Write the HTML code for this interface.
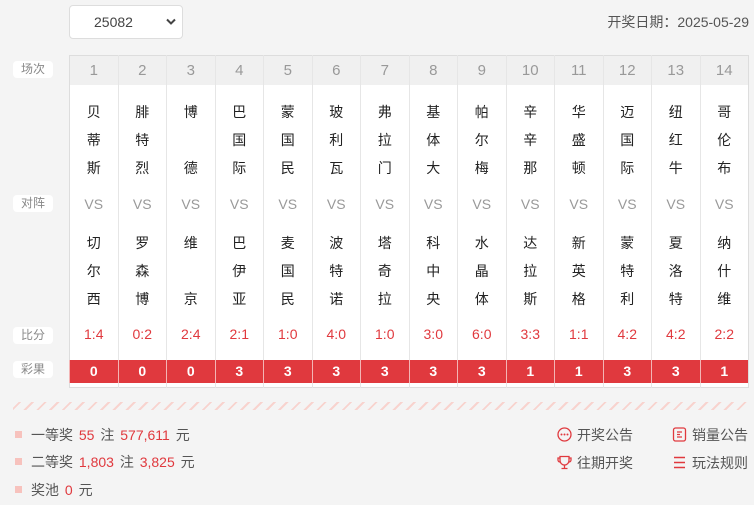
<!DOCTYPE html>
<html><head><meta charset="utf-8"><style>
*{margin:0;padding:0;box-sizing:border-box}
body{width:754px;height:505px;background:#f4f4f4;font-family:"Liberation Sans","Noto Sans CJK SC",sans-serif;position:relative;overflow:hidden;color:#333}
.sel{position:absolute;left:69px;top:5px;width:114px;height:34px;background:#fff;border:1px solid #ddd;border-radius:4px;font-size:14px;color:#444;line-height:32px;padding-left:24px}
.sel svg{position:absolute;right:6px;top:12px}
.date{position:absolute;right:5px;top:12px;font-size:14px;color:#555}
.lab{position:absolute;left:13px;width:40px;height:17px;background:#fff;border-radius:4px;font-size:12px;color:#888;text-align:center;line-height:17px}
table{position:absolute;left:69px;top:55px;width:680px;border-collapse:collapse;table-layout:fixed;background:#fff;border:1px solid #ddd;border-radius:4px}
td{border-left:1px solid #e6e6e6;text-align:center;font-size:14px;padding:0;vertical-align:middle}
td:first-child{border-left:none}
tr.h td{height:29px;background:#f0f0f0;color:#999;font-size:15px}
tr.n td{height:104px;line-height:28px;color:#222}
tr.n1 td{padding-top:6px}
tr.v td{height:30px;color:#999}
tr.s td{height:37px;color:#e0393e;vertical-align:top;padding-top:3px}
tr.r td{height:23px;background:#e0393e;color:#fff;font-weight:bold;border-left:1px solid #f3b5b5}
tr.b td{height:5px}
.stripe{position:absolute;left:13px;top:402px;width:735px;height:8px;background:repeating-linear-gradient(135deg,transparent 0 4px,#f8d3ce 4px 6px,transparent 6px 9px)}
.pr{position:absolute;left:15px;font-size:14px;color:#555;word-spacing:1px}
.pr i{display:inline-block;width:7px;height:7px;background:#f7c2bd;margin-right:9px;vertical-align:2px}
.pr b{font-weight:normal;color:#e0393e;margin:0 1px}
.lk{position:absolute;font-size:14px;color:#555}
.lk svg{position:absolute;left:-20px;top:2px}
</style></head><body>
<div class="sel">25082<svg width="10" height="8" viewBox="0 0 10 8"><path d="M1 1.5L5 5.5L9 1.5" stroke="#444" stroke-width="2" fill="none"/></svg></div>
<div class="date">开奖日期：2025-05-29</div>
<div class="lab" style="top:61px">场次</div>
<div class="lab" style="top:195px">对阵</div>
<div class="lab" style="top:327px">比分</div>
<div class="lab" style="top:361px">彩果</div>
<table>
<tr class="h"><td>1</td><td>2</td><td>3</td><td>4</td><td>5</td><td>6</td><td>7</td><td>8</td><td>9</td><td>10</td><td>11</td><td>12</td><td>13</td><td>14</td></tr>
<tr class="n n1"><td>贝<br>蒂<br>斯</td><td>腓<br>特<br>烈</td><td>博<br><br>德</td><td>巴<br>国<br>际</td><td>蒙<br>国<br>民</td><td>玻<br>利<br>瓦</td><td>弗<br>拉<br>门</td><td>基<br>体<br>大</td><td>帕<br>尔<br>梅</td><td>辛<br>辛<br>那</td><td>华<br>盛<br>顿</td><td>迈<br>国<br>际</td><td>纽<br>红<br>牛</td><td>哥<br>伦<br>布</td></tr>
<tr class="v"><td>VS</td><td>VS</td><td>VS</td><td>VS</td><td>VS</td><td>VS</td><td>VS</td><td>VS</td><td>VS</td><td>VS</td><td>VS</td><td>VS</td><td>VS</td><td>VS</td></tr>
<tr class="n"><td>切<br>尔<br>西</td><td>罗<br>森<br>博</td><td>维<br><br>京</td><td>巴<br>伊<br>亚</td><td>麦<br>国<br>民</td><td>波<br>特<br>诺</td><td>塔<br>奇<br>拉</td><td>科<br>中<br>央</td><td>水<br>晶<br>体</td><td>达<br>拉<br>斯</td><td>新<br>英<br>格</td><td>蒙<br>特<br>利</td><td>夏<br>洛<br>特</td><td>纳<br>什<br>维</td></tr>
<tr class="s"><td>1:4</td><td>0:2</td><td>2:4</td><td>2:1</td><td>1:0</td><td>4:0</td><td>1:0</td><td>3:0</td><td>6:0</td><td>3:3</td><td>1:1</td><td>4:2</td><td>4:2</td><td>2:2</td></tr>
<tr class="r"><td>0</td><td>0</td><td>0</td><td>3</td><td>3</td><td>3</td><td>3</td><td>3</td><td>3</td><td>1</td><td>1</td><td>3</td><td>3</td><td>1</td></tr>
<tr class="b"><td></td><td></td><td></td><td></td><td></td><td></td><td></td><td></td><td></td><td></td><td></td><td></td><td></td><td></td></tr>
</table>
<div class="stripe"></div>
<div class="pr" style="top:425px"><i></i>一等奖 <b>55</b> 注 <b>577,611</b> 元</div>
<div class="pr" style="top:452px"><i></i>二等奖 <b>1,803</b> 注 <b>3,825</b> 元</div>
<div class="pr" style="top:480px"><i></i>奖池 <b>0</b> 元</div>
<div class="lk" style="left:577px;top:425px"><svg width="15" height="15" viewBox="0 0 15 15"><circle cx="7.5" cy="7.5" r="6.5" fill="none" stroke="#e0393e" stroke-width="1.3"/><circle cx="4.5" cy="7.5" r="1" fill="#e0393e"/><circle cx="7.5" cy="7.5" r="1" fill="#e0393e"/><circle cx="10.5" cy="7.5" r="1" fill="#e0393e"/></svg>开奖公告</div>
<div class="lk" style="left:692px;top:425px"><svg width="15" height="15" viewBox="0 0 15 15"><rect x="1.5" y="1" width="12" height="13" rx="2" fill="none" stroke="#e0393e" stroke-width="1.3"/><path d="M5 5h5M5 7.5h3M5 10h5" stroke="#e0393e" stroke-width="1.2"/></svg>销量公告</div>
<div class="lk" style="left:577px;top:453px"><svg width="15" height="15" viewBox="0 0 15 15"><path d="M3 1.5h9v4a4.5 4.5 0 0 1-9 0z M3 3H1v2a2 2 0 0 0 2 2 M12 3h2v2a2 2 0 0 1-2 2 M7.5 10v3 M4.5 13.5h6" fill="none" stroke="#e0393e" stroke-width="1.3"/></svg>往期开奖</div>
<div class="lk" style="left:692px;top:453px"><svg width="15" height="15" viewBox="0 0 15 15"><path d="M2 2.5h11M2 7.5h11M2 12.5h11" stroke="#e0393e" stroke-width="1.4"/></svg>玩法规则</div>
</body></html>
